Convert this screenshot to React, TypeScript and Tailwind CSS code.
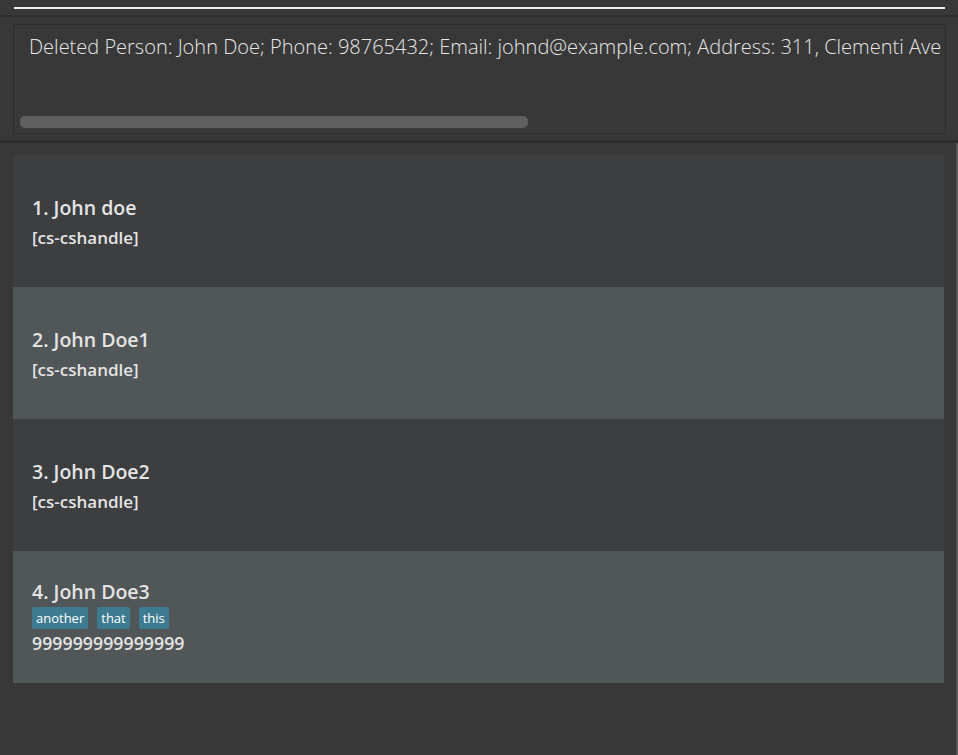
import React from "react";

type Person = {
  name: string;
  handle?: string;
  tags?: string[];
  phone?: string;
};

const people: Person[] = [
  { name: "John doe", handle: "[cs-cshandle]" },
  { name: "John Doe1", handle: "[cs-cshandle]" },
  { name: "John Doe2", handle: "[cs-cshandle]" },
  { name: "John Doe3", tags: ["another", "that", "this"], phone: "999999999999999" },
];

const font = { fontFamily: "'Segoe UI', 'Open Sans', 'Noto Sans', sans-serif" };

function PersonCard({ person, index }: { person: Person; index: number }) {
  const shade = index % 2 === 0 ? "bg-[#3c3e40]" : "bg-[#515658]";
  const nudge = person.handle ? "pt-[5px]" : "";
  return (
    <div className={`h-[132px] flex flex-col justify-center pl-[19px] ${shade} ${nudge}`}>
      <div className="text-[19.5px] font-semibold leading-[24px] text-[#e4e4e4]">
        {index + 1}. {person.name}
      </div>
      {person.handle && (
        <div className="text-[17px] font-semibold leading-[28px] mt-[4px] text-[#e4e4e4]">{person.handle}</div>
      )}
      {person.tags && (
        <div className="flex gap-[9px] mt-[3px] mb-[3px]">
          {person.tags.map((t) => (
            <span
              key={t}
              className="bg-[#3e7b91] text-white text-[13px] leading-[22px] px-[4px] rounded-[2px]"
            >
              {t}
            </span>
          ))}
        </div>
      )}
      {person.phone && (
        <div className="text-[17.8px] font-semibold leading-[22px] text-[#e4e4e4]">{person.phone}</div>
      )}
    </div>
  );
}

export default function App() {
  return (
    <div className="w-[958px] h-[755px] bg-[#383838] overflow-hidden flex flex-col" style={font}>
      {/* command box */}
      <div className="h-[15px] px-[14px] pt-[7px] pr-[13px]">
        <div className="h-[2px] bg-[#f0f0f0]" />
      </div>
      <div className="h-[2px] bg-[#2f2f2f]" />

      {/* result display */}
      <div className="px-[13px] pt-[7px] pb-[6px] pr-[12px]">
        <div className="h-[110px] border border-[#2b2b2b] bg-[#383838] relative overflow-hidden">
          <div className="pl-[15px] pt-[7px] whitespace-nowrap text-[20px] font-light text-[#e6e6e6]">
            Deleted Person: John Doe; Phone: 98765432; Email: johnd@example.com; Address: 311, Clementi Ave
          </div>
          <div className="absolute left-[6px] top-[91px] w-[508px] h-[12px] rounded-[5px] bg-[#606060]" />
        </div>
      </div>
      <div className="h-[3px] bg-[#2c2c2c]" />

      {/* person list */}
      <div className="flex-1 flex border-r-[2px] border-[#575757]">
        <div className="flex-1 pl-[13px] pr-[12px] pt-[12px]">
          {people.map((p, i) => (
            <PersonCard key={i} person={p} index={i} />
          ))}
        </div>
      </div>
    </div>
  );
}
